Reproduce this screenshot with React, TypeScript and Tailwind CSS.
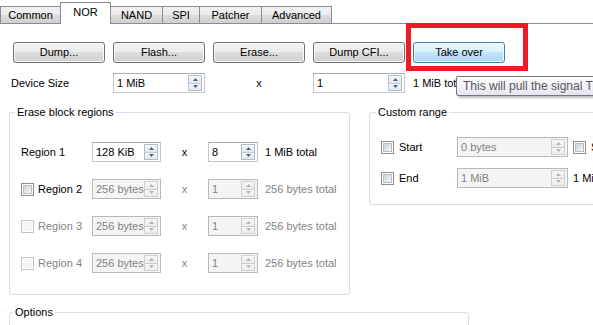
import React from "react";

const Arrow = ({ up, disabled }: { up?: boolean; disabled?: boolean }) => (
  <div
    className={`flex flex-1 items-center justify-center ${
      up ? "border-b border-[#c5ccd6]" : ""
    } ${
      disabled
        ? "bg-[linear-gradient(#f7f7f7,#ececec)]"
        : "bg-[linear-gradient(#f5f8fc,#dfe7f0)]"
    }`}
  >
    <svg width="5" height="3" viewBox="0 0 5 3">
      {up ? (
        <polygon points="0,3 5,3 2.5,0" fill={disabled ? "#b4b4b4" : "#4e6080"} />
      ) : (
        <polygon points="0,0 5,0 2.5,3" fill={disabled ? "#b4b4b4" : "#4e6080"} />
      )}
    </svg>
  </div>
);

const Spin = ({
  w,
  value,
  disabled,
}: {
  w: string;
  value: string;
  disabled?: boolean;
}) => (
  <div
    className={`flex h-[20px] ${w} shrink-0 items-stretch border ${
      disabled
        ? "border-[#b7babd] bg-[#f4f4f4] text-[#838383]"
        : "border-[#c3c6cc] border-t-[#abadb3] bg-white text-black"
    }`}
  >
    <div className="flex flex-1 items-center overflow-hidden whitespace-nowrap pl-[3px]">
      {value}
    </div>
    <div
      className={`my-[1px] mr-[2px] flex w-[14px] flex-col border ${
        disabled ? "border-[#cfcfcf]" : "border-[#b4bdca]"
      }`}
    >
      <Arrow up disabled={disabled} />
      <Arrow disabled={disabled} />
    </div>
  </div>
);

const Check = ({ disabled }: { disabled?: boolean }) => (
  <span
    className={`box-border flex h-[13px] w-[13px] shrink-0 items-center justify-center border ${
      disabled ? "border-[#c4c4c4] bg-white" : "border-[#8e8f8f] bg-white"
    }`}
  >
    <span
      className={`h-[9px] w-[9px] ${
        disabled
          ? "bg-[#f4f4f4]"
          : "border border-[#b9bcc0] bg-[linear-gradient(135deg,#cfd2d6,#f7f7f7)]"
      }`}
    />
  </span>
);

const Button = ({ label, hot }: { label: string; hot?: boolean }) => (
  <div
    className={`flex h-[21px] w-[92px] items-center justify-center rounded-[3px] border ${
      hot
        ? "border-[#3c7fb1] bg-[linear-gradient(#eaf6fd_0%,#d9f0fc_50%,#bee6fd_50%,#a7d9f5_100%)] shadow-[inset_0_0_0_1px_#f0f9fe]"
        : "border-[#707070] bg-[linear-gradient(#f2f2f2_0%,#ebebeb_50%,#dddddd_50%,#cfcfcf_100%)] shadow-[inset_0_0_0_1px_#fbfbfb]"
    }`}
  >
    {label}
  </div>
);

const Group = ({
  title,
  className,
  titleLeft,
  children,
}: {
  title: string;
  className: string;
  titleLeft: string;
  children?: React.ReactNode;
}) => (
  <div className={`relative shrink-0 rounded-[3px] border border-[#d5dfe5] ${className}`}>
    <span className={`absolute top-[-7px] ${titleLeft} bg-white px-[2px] leading-[13px]`}>
      {title}
    </span>
    {children}
  </div>
);

const tabs = [
  { name: "Common", w: "w-[61px]" },
  { name: "NOR", w: "w-[51px]", sel: true },
  { name: "NAND", w: "w-[53px]" },
  { name: "SPI", w: "w-[38px]" },
  { name: "Patcher", w: "w-[63px]" },
  { name: "Advanced", w: "w-[71px]" },
];

const RegionRow = ({
  label,
  check,
  checkDisabled,
  a,
  b,
  total,
  disabled,
}: {
  label: string;
  check?: boolean;
  checkDisabled?: boolean;
  a: string;
  b: string;
  total: string;
  disabled?: boolean;
}) => (
  <div className="flex h-[20px] items-center">
    <div
      className={`flex w-[71px] shrink-0 items-center gap-[4px] ${
        checkDisabled ? "text-[#838383]" : "text-black"
      }`}
    >
      {check && <Check disabled={checkDisabled} />}
      <span>{label}</span>
    </div>
    <Spin w="w-[69px]" value={a} disabled={disabled} />
    <div className={`w-[47px] text-center ${disabled ? "text-[#838383]" : ""}`}>x</div>
    <Spin w="w-[50px]" value={b} disabled={disabled} />
    <span className={`ml-[7px] whitespace-nowrap ${disabled ? "text-[#838383]" : ""}`}>
      {total}
    </span>
  </div>
);

export default function App() {
  return (
    <div className="relative h-[325px] w-[593px] overflow-hidden bg-white font-['Liberation_Sans',Arial,sans-serif] text-[11px] text-black">
      {/* Tab bar */}
      <div className="flex h-[24px] items-end border-b border-[#898c95]">
        {tabs.map((t, i) => (
          <div
            key={t.name}
            className={`${t.w} ${i > 0 ? "-ml-px" : ""} flex shrink-0 items-center justify-center border border-b-0 border-[#898c95] ${
              t.sel
                ? "relative z-10 mb-[-1px] h-[22px] bg-white pb-[2px]"
                : "h-[17px] bg-[linear-gradient(#f2f2f2_0%,#ebebeb_50%,#dddddd_50%,#cfcfcf_100%)]"
            }`}
          >
            {t.name}
          </div>
        ))}
      </div>

      {/* Buttons */}
      <div className="flex gap-[8px] pl-[13px] pt-[18px]">
        <Button label="Dump..." />
        <Button label="Flash..." />
        <Button label="Erase..." />
        <Button label="Dump CFI..." />
        <Button label="Take over" hot />
      </div>

      {/* Device size */}
      <div className="mt-[10px] flex h-[20px] items-center pl-[11px]">
        <span className="w-[102px] shrink-0">Device Size</span>
        <Spin w="w-[92px]" value="1 MiB" />
        <div className="w-[108px] shrink-0 text-center">x</div>
        <Spin w="w-[92px]" value="1" />
        <span className="ml-[8px] whitespace-nowrap">1 MiB total</span>
      </div>

      {/* Group boxes */}
      <div className="mt-[19px] flex items-start">
        <Group
          title="Erase block regions"
          titleLeft="left-[5px]"
          className="ml-[9px] h-[183px] w-[341px]"
        >
          <div className="flex flex-col gap-[17px] pl-[11px] pt-[29px]">
            <RegionRow label="Region 1" a="128 KiB" b="8" total="1 MiB total" />
            <RegionRow
              label="Region 2"
              check
              a="256 bytes"
              b="1"
              total="256 bytes total"
              disabled
            />
            <RegionRow
              label="Region 3"
              check
              checkDisabled
              a="256 bytes"
              b="1"
              total="256 bytes total"
              disabled
            />
            <RegionRow
              label="Region 4"
              check
              checkDisabled
              a="256 bytes"
              b="1"
              total="256 bytes total"
              disabled
            />
          </div>
        </Group>

        <Group
          title="Custom range"
          titleLeft="left-[6px]"
          className="ml-[19px] h-[93px] w-[240px]"
        >
          <div className="flex flex-col gap-[11px] pl-[11px] pt-[24px]">
            <div className="flex h-[20px] items-center">
              <div className="flex w-[76px] shrink-0 items-center gap-[5px]">
                <Check />
                <span>Start</span>
              </div>
              <Spin w="w-[111px]" value="0 bytes" disabled />
              <div className="ml-[5px] flex shrink-0 items-center gap-[5px]">
                <Check />
                <span>Size</span>
              </div>
            </div>
            <div className="flex h-[20px] items-center">
              <div className="flex w-[76px] shrink-0 items-center gap-[5px]">
                <Check />
                <span>End</span>
              </div>
              <Spin w="w-[111px]" value="1 MiB" disabled />
              <span className="ml-[5px] whitespace-nowrap">1 MiB total</span>
            </div>
          </div>
        </Group>
      </div>

      {/* Options */}
      <Group title="Options" titleLeft="left-[3px]" className="ml-[9px] mt-[17px] h-[40px] w-[460px]" />

      {/* Red highlight */}
      <div className="absolute left-[406px] top-[23px] h-[48px] w-[122px] border-[5px] border-[#ed1c24]" />

      {/* Tooltip */}
      <div className="absolute left-[456px] top-[76px] flex h-[20px] items-center whitespace-nowrap rounded-[2px] border border-[#767676] bg-[linear-gradient(#ffffff,#e4e5f0)] pl-[6px] pr-[8px] text-[12px] text-[#575757] shadow-[2px_2px_2px_rgba(0,0,0,0.25)]">
        This will pull the signal TRST low
      </div>
    </div>
  );
}
